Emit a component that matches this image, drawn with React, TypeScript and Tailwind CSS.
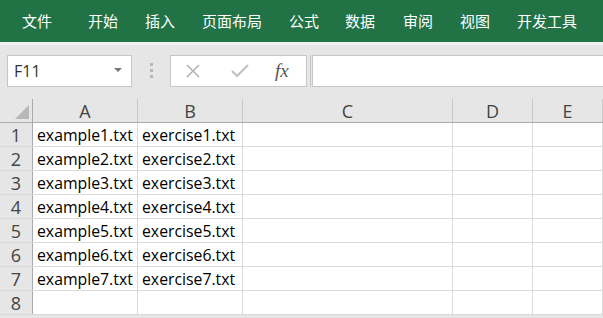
import React from "react";

const tabs = ["文件", "开始", "插入", "页面布局", "公式", "数据", "审阅", "视图", "开发工具"];
const tabX = [22, 88, 145, 202, 289, 345, 403, 460, 517];

const cols = [
  { label: "A", w: 105 },
  { label: "B", w: 105 },
  { label: "C", w: 210 },
  { label: "D", w: 80 },
  { label: "E", w: 70 },
];

const rows = [1, 2, 3, 4, 5, 6, 7, 8];

export default function App() {
  return (
    <div
      className="relative w-[603px] h-[318px] overflow-hidden bg-[#e6e6e6]"
      style={{ fontFamily: '"Open Sans", "Noto Sans CJK SC", sans-serif' }}
    >
      {/* ribbon tabs */}
      <div className="relative h-[42px] bg-[#217346] text-white text-[15px]">
        {tabs.map((t, i) => (
          <span
            key={t}
            className="absolute top-[11px] leading-[20px]"
            style={{ left: tabX[i], fontFamily: '"Noto Sans CJK SC", sans-serif' }}
          >
            {t}
          </span>
        ))}
      </div>
      <div className="h-[3px] bg-[#f1f1f1]" />

      {/* formula bar */}
      <div className="flex items-center h-[54px] pb-[3px]">
        <div className="ml-[7px] w-[125px] h-[32px] bg-white border border-[#c6c6c6] flex items-center justify-between pl-[6px] pr-[9px]">
          <span className="text-[16px] text-[#333]">F11</span>
          <svg width="8" height="5" viewBox="0 0 8 5">
            <path d="M0 0 L8 0 L4 4 Z" fill="#777" />
          </svg>
        </div>
        <div className="w-[38px] flex flex-col items-center gap-[3px]">
          <div className="w-[3px] h-[3px] bg-[#b8b8b8]" />
          <div className="w-[3px] h-[3px] bg-[#b8b8b8]" />
          <div className="w-[3px] h-[3px] bg-[#b8b8b8]" />
        </div>
        <div className="w-[137px] h-[32px] bg-white border border-[#c6c6c6] flex items-center">
          <svg className="ml-[14px]" width="16" height="16" viewBox="0 0 16 16">
            <path d="M2 2 L14 14 M14 2 L2 14" stroke="#b3b3b3" strokeWidth="1.6" />
          </svg>
          <svg className="ml-[30px]" width="18" height="14" viewBox="0 0 18 14">
            <path d="M1 7 L6 12 L17 1" stroke="#c0c0c0" strokeWidth="2" fill="none" />
          </svg>
          <span
            className="ml-[26px] text-[19px] italic text-[#555] leading-none"
            style={{ fontFamily: '"Liberation Serif", serif' }}
          >
            fx
          </span>
        </div>
        <div className="ml-[3px] w-[1px] h-[32px] bg-[#c6c6c6]" />
        <div className="ml-[1px] flex-1 h-[32px] bg-white border-y border-l border-[#c6c6c6]" />
      </div>

      {/* grid */}
      <div className="bg-white">
        <div className="flex h-[24px] bg-[#e6e6e6] border-b border-[#ababab]">
          <div className="w-[33px] shrink-0 border-r border-[#ababab] relative">
            <svg className="absolute right-[3px] bottom-[3px]" width="14" height="14" viewBox="0 0 14 14">
              <path d="M14 0 L14 14 L0 14 Z" fill="#b8b8b8" />
            </svg>
          </div>
          {cols.map((c) => (
            <div
              key={c.label}
              className="shrink-0 border-r border-[#c8c8c8] flex items-center justify-center text-[18px] text-[#444] leading-none"
              style={{ width: c.w }}
            >
              {c.label}
            </div>
          ))}
        </div>
        {rows.map((r) => (
          <div key={r} className="flex h-[24px] border-b border-[#dadada]">
            <div className="w-[33px] shrink-0 bg-[#e6e6e6] border-r border-[#ababab] flex items-center justify-center pt-[1px] text-[18px] text-[#444] leading-none">
              {r}
            </div>
            {cols.map((c, ci) => (
              <div
                key={c.label}
                className="shrink-0 border-r border-[#dadada] flex items-center pl-[4px] pt-[2px] text-[15.8px] text-black leading-none overflow-hidden whitespace-nowrap"
                style={{ width: c.w }}
              >
                {r <= 7 && ci === 0 ? `example${r}.txt` : ""}
                {r <= 7 && ci === 1 ? `exercise${r}.txt` : ""}
              </div>
            ))}
          </div>
        ))}
      </div>
    </div>
  );
}
